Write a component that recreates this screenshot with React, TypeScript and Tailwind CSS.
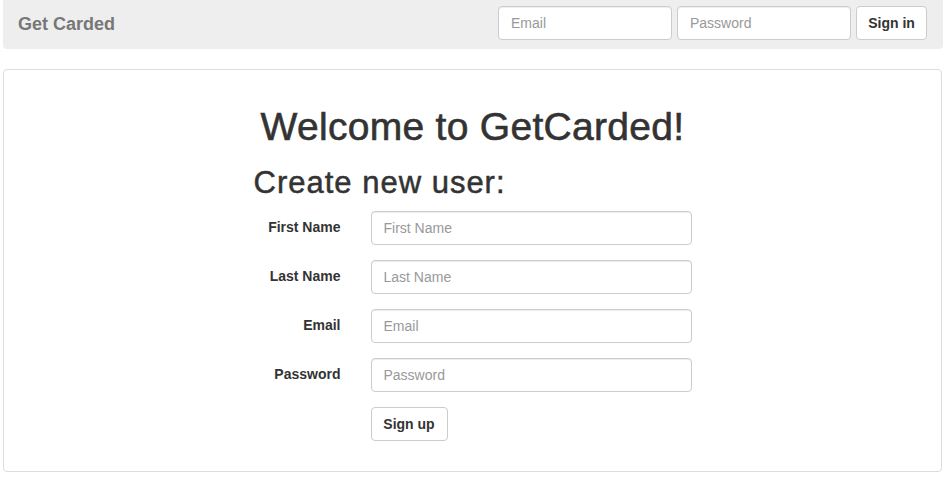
import React from 'react'

const fields = [
  { label: 'First Name', type: 'text' },
  { label: 'Last Name', type: 'text' },
  { label: 'Email', type: 'email' },
  { label: 'Password', type: 'password' },
]

const inputCls =
  'h-[34px] rounded-[4px] border border-[#cccccc] bg-white px-[12px] text-[14px] text-[#555] shadow-[inset_0_1px_1px_rgba(0,0,0,0.075)] outline-none placeholder:text-[#999999]'

const btnCls =
  'h-[34px] whitespace-nowrap rounded-[4px] border border-[#cccccc] bg-white px-0 text-center text-[14px] font-bold text-[#333333]'

export default function App() {
  return (
    <div className="h-[479px] w-[948px] bg-white font-['Liberation_Sans',Arial,sans-serif] text-[14px] text-[#333333]">
      {/* Navbar */}
      <nav className="ml-[3px] flex h-[49px] w-[940px] items-start justify-between rounded-b-[4px] bg-[#eeeeee] px-[15px] pt-[6px]">
        <span className="mt-[7px] text-[18px] leading-[22px] font-bold text-[#777777]">Get Carded</span>
        <form className="mr-px flex gap-[5px]">
          <input type="email" placeholder="Email" className={`${inputCls} w-[174px]`} />
          <input type="password" placeholder="Password" className={`${inputCls} w-[174px]`} />
          <button type="button" className={`${btnCls} w-[71px]`}>
            Sign in
          </button>
        </form>
      </nav>

      {/* Main panel */}
      <main className="mt-[20px] ml-[3px] h-[403px] w-[939px] rounded-[4px] border border-[#dddddd] pt-[36px]">
        <h1 className="text-center text-[39px] leading-[42px] tracking-[0.3px] [-webkit-text-stroke:0.6px_#333333]">
          Welcome to GetCarded!
        </h1>
        <div className="mx-auto mt-[18px] w-[438px]">
          <h2 className="text-[31px] leading-[34px] tracking-[1px] [-webkit-text-stroke:0.5px_#333333]">
            Create new user:
          </h2>
          <form className="mt-[11px] grid grid-cols-[87px_321px] gap-x-[30px] gap-y-[15px]">
            {fields.map((f) => (
              <React.Fragment key={f.label}>
                <label className="flex items-center justify-end pb-[2px] font-bold">{f.label}</label>
                <input type={f.type} placeholder={f.label} className={inputCls} />
              </React.Fragment>
            ))}
            <div />
            <div>
              <button type="button" className={`${btnCls} w-[77px]`}>
                Sign up
              </button>
            </div>
          </form>
        </div>
      </main>
    </div>
  )
}
